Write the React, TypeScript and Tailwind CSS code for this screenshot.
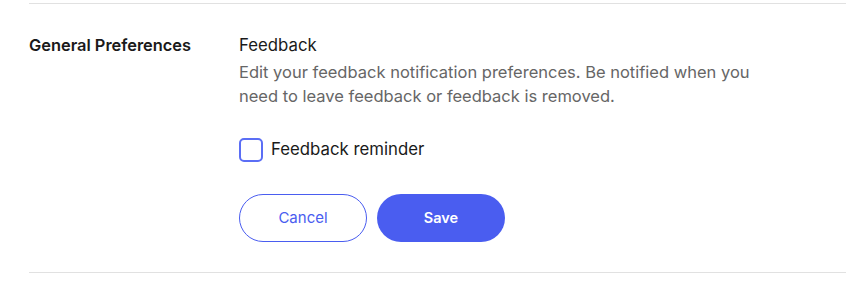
export default function App() {
  return (
    <div className="h-[284px] w-[846px] bg-white pl-[29px] pt-[3px] font-['Inter',sans-serif]">
      <div className="flex border-y border-[#e1e1e1] pb-[30px] pt-[29px]">
        <div className="w-[210px] shrink-0 text-[16.4px] font-semibold leading-6 text-[#1a1a1a]">
          General Preferences
        </div>
        <div className="flex flex-col">
          <h3 className="text-[16.8px] leading-6 text-[#1a1a1a]">Feedback</h3>
          <p className="mt-[3px] max-w-[540px] text-[16.5px] leading-6 text-[#666]">
            Edit your feedback notification preferences. Be notified when you need to leave feedback or
            feedback is removed.
          </p>
          <label className="mt-[30px] flex h-6 items-center gap-2 text-[16.8px] text-[#1a1a1a]">
            <span className="h-6 w-6 rounded-[5px] border-2 border-[#5b6ef5]" />
            Feedback reminder
          </label>
          <div className="mt-[32px] flex gap-[10px]">
            <button
              type="button"
              className="h-12 w-32 rounded-full border border-[#4a5df0] text-[15px] text-[#4a5df0]"
            >
              Cancel
            </button>
            <button
              type="button"
              className="h-12 w-32 rounded-full bg-[#4a5df0] text-[14.5px] font-semibold text-white"
            >
              Save
            </button>
          </div>
        </div>
      </div>
    </div>
  );
}
